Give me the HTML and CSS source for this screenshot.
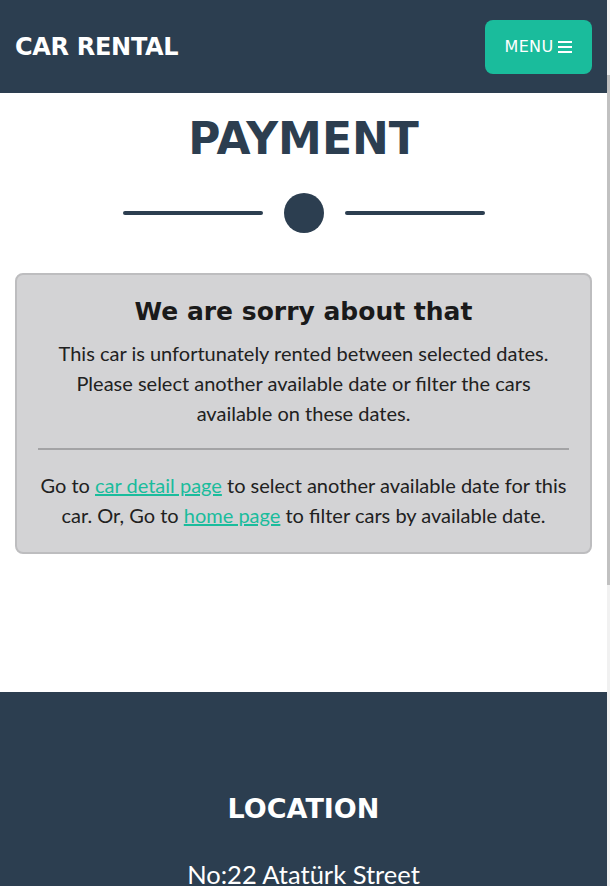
FILE: index.html
```html
<!DOCTYPE html>
<html lang="en">
<head>
<meta charset="utf-8">
<title>Car Rental - Payment</title>
<link rel="stylesheet" href="styles.css">
</head>
<body>
<nav class="navbar">
  <a class="brand" href="#">CAR RENTAL</a>
  <button class="menu-btn">MENU <svg class="bars" viewBox="0 0 14 12" width="14" height="12"><rect x="0" y="0" width="14" height="2"/><rect x="0" y="5" width="14" height="2"/><rect x="0" y="10" width="14" height="2"/></svg></button>
</nav>
<main class="page">
  <h2 class="page-heading">PAYMENT</h2>
  <div class="divider">
    <span class="line"></span>
    <span class="dot"></span>
    <span class="line"></span>
  </div>
  <div class="card">
    <h3 class="card-title">We are sorry about that</h3>
    <p class="card-text">This car is unfortunately rented between selected dates. Please select another available date or filter the cars available on these dates.</p>
    <hr class="card-rule">
    <p class="card-text">Go to <a href="#">car detail page</a> to select another available date for this car. Or, Go to <a href="#">home page</a> to filter cars by available date.</p>
  </div>
</main>
<footer class="footer">
  <h4 class="footer-title">LOCATION</h4>
  <p class="footer-text">No:22 Atatürk Street</p>
</footer>
<div class="scrollbar"><div class="thumb"></div></div>
</body>
</html>
```
FILE: styles.css
```css
html, body { margin: 0; padding: 0; }
body {
  width: 607px;
  font-family: "Lato", "Liberation Sans", sans-serif;
  background: #fff;
  color: #212529;
  overflow: hidden;
}
.navbar {
  height: 93px;
  background: #2c3e50;
  display: flex;
  align-items: center;
  justify-content: space-between;
  padding: 0 15px;
  box-sizing: border-box;
}
.brand {
  font-family: "DejaVu Sans", sans-serif;
  font-weight: bold;
  font-size: 24px;
  letter-spacing: -0.3px;
  color: #fff;
  text-decoration: none;
}
.menu-btn {
  width: 107px;
  height: 54px;
  background: #1abc9c;
  border: none;
  border-radius: 8px;
  color: #fff;
  font-family: "DejaVu Sans", sans-serif;
  font-size: 16px;
  letter-spacing: 0.3px;
  display: flex;
  align-items: center;
  justify-content: center;
  gap: 5px;
  padding: 0;
}
.bars { fill: #fff; }
.page {
  height: 599px;
  padding: 0 15px;
  box-sizing: border-box;
  display: flex;
  flex-direction: column;
  align-items: center;
}
.page-heading {
  margin: 17px 0 0;
  font-family: "DejaVu Sans", sans-serif;
  font-weight: bold;
  font-size: 44px;
  line-height: 58px;
  color: #2c3e50;
}
.divider {
  margin-top: 25px;
  display: flex;
  align-items: center;
  gap: 21px;
}
.line {
  width: 140px;
  height: 4px;
  border-radius: 2px;
  background: #2c3e50;
}
.dot {
  width: 40px;
  height: 40px;
  border-radius: 50%;
  background: #2c3e50;
}
.card {
  margin-top: 40px;
  width: 100%;
  box-sizing: border-box;
  background: #d3d3d5;
  border: 2px solid #bdbdbf;
  border-radius: 8px;
  padding: 20px 21px 22px;
  text-align: center;
}
.card-title {
  margin: 0 0 9px;
  font-family: "DejaVu Sans", sans-serif;
  font-weight: bold;
  font-size: 25px;
  line-height: 34px;
  color: #1a1a1a;
}
.card-text {
  margin: 0;
  font-size: 20px;
  line-height: 30px;
  color: #212121;
}
.card-text a { color: #1abc9c; }
.card-rule {
  margin: 20px 0 20px;
  border: 0;
  border-top: 2px solid #a3a3a5;
}
.footer {
  height: 300px;
  background: #2c3e50;
  text-align: center;
  color: #fff;
  padding-top: 97px;
  box-sizing: border-box;
}
.footer-title {
  margin: 0;
  font-family: "DejaVu Sans", sans-serif;
  font-weight: bold;
  font-size: 27px;
  line-height: 40px;
}
.footer-text {
  margin: 26px 0 0;
  font-size: 25.5px;
  line-height: 38px;
}
.scrollbar {
  position: fixed;
  top: 0;
  right: 0;
  width: 3px;
  height: 886px;
  background: #f1f1f1;
}
.thumb {
  margin-top: 75px;
  height: 510px;
  background: #c1c1c1;
}
```
